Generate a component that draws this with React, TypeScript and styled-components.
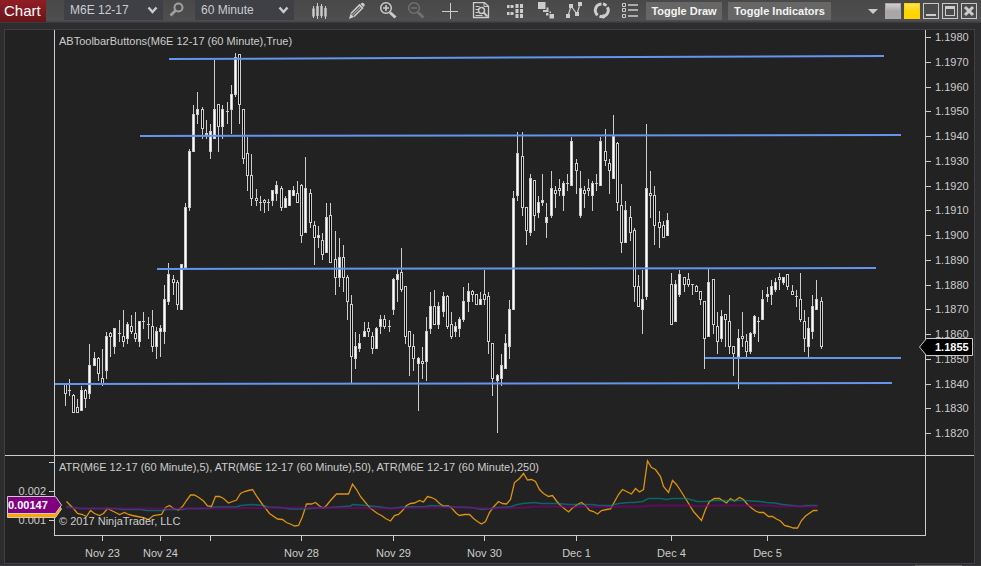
import React from 'react';
import styled, { createGlobalStyle } from 'styled-components';

const GlobalStyle = createGlobalStyle`
  * { box-sizing: border-box; }
  body {
    margin: 0;
    background: #2d2d30;
    color: #ccc;
    font: 11px/13px "Liberation Sans", Arial, sans-serif;
    overflow: hidden;
  }
  button, select { font: inherit; color: inherit; margin: 0; }
`;

const Window = styled.div`
  display: flex;
  flex-direction: column;
  min-height: 100vh;
`;

const Toolbar = styled.header`
  display: flex;
  align-items: flex-start;
  flex: 0 0 23px;
  padding-right: 4px;
  background: linear-gradient(#484848, #4f4f4f 21px, #3b3b3d 22px);
`;

const ChartTab = styled.h1`
  flex: 0 0 46px;
  height: 22px;
  margin: 0 18px 0 0;
  padding-left: 4px;
  background: linear-gradient(#911d24, #68151a);
  color: #fff;
  font-size: 15px;
  font-weight: 400;
  line-height: 22px;
`;

const ComboBox = styled.label`
  display: grid;
  flex: 0 0 99px;
  height: 20px;
  align-items: center;
  background: #3f3f46;
  > * { grid-area: 1 / 1; }
  svg { justify-self: end; margin-right: 5px; pointer-events: none; }
`;

const ComboSelect = styled.select`
  width: 100%;
  height: 20px;
  padding: 0 0 0 6px;
  border: 0;
  appearance: none;
  background: transparent;
  color: #ccc;
  font-size: 12px;
  line-height: 20px;
`;

const IconButton = styled.button<{ $gap?: number; $color?: string }>`
  display: block;
  flex: 0 0 20px;
  height: 22px;
  margin-left: ${(p) => p.$gap ?? 8}px;
  padding: 0;
  border: 0;
  background: none;
  color: ${(p) => p.$color ?? '#ccc'};
  svg { display: block; }
`;

const FindButton = styled(IconButton)`
  margin-right: 8px;
`;

const ToggleButton = styled.button<{ $width: number }>`
  flex: 0 0 ${(p) => p.$width}px;
  height: 18px;
  margin-top: 2px;
  margin-left: 6px;
  padding: 0;
  border: 0;
  background: #666;
  color: #f4f4f4;
  font-size: 11px;
  font-weight: 700;
  line-height: 18px;
  white-space: nowrap;
`;

const WindowControls = styled.div`
  display: flex;
  gap: 3px;
  margin-top: 3px;
  margin-left: auto;
`;

const WindowButton = styled.button<{ $fill?: string; $border?: string }>`
  width: 16px;
  height: 16px;
  padding: 0;
  border: 1px solid ${(p) => p.$border ?? '#c8c8c8'};
  background: ${(p) => p.$fill ?? 'transparent'};
  svg { display: block; }
`;

const MenuButton = styled(WindowButton)`
  margin-right: 1px;
  border-color: transparent;
`;

const ChartPanel = styled.main`
  display: grid;
  grid-template-columns: 49px minmax(0, 1fr) 48px;
  grid-template-rows: 425px 81px 1fr;
  flex: 1;
  margin: 6px 6px 1px 4px;
  border: 1px solid #3f3f46;
  background: #222;
`;

const PlotArea = styled.section<{ $lower?: boolean }>`
  position: relative;
  min-width: 0;
  border: solid #ccc;
  border-width: ${(p) => (p.$lower ? '1px' : '0 1px')};
`;

const PlotSvg = styled.svg`
  display: block;
  width: 100%;
  height: 100%;
`;

const PlotCaption = styled.p<{ $top: number }>`
  position: absolute;
  top: ${(p) => p.$top}px;
  left: 4px;
  margin: 0;
  white-space: nowrap;
`;

const AxisCell = styled.div<{ $ruled?: boolean }>`
  position: relative;
  border-top: ${(p) => (p.$ruled ? '1px solid #ccc' : '0')};
`;

const PriceScale = styled.ol`
  display: flex;
  flex-direction: column;
  justify-content: space-between;
  height: 410px;
  margin: 0;
  padding: 1px 0 0;
  list-style: none;
`;

const PriceTick = styled.li`
  display: flex;
  align-items: center;
  gap: 4px;
  height: 13px;
  &::before { content: ""; width: 5px; height: 1px; background: #ccc; }
`;

const AtrScale = styled.ol`
  display: flex;
  flex-direction: column;
  gap: 16px;
  margin: 0;
  padding: 0;
  list-style: none;
`;

const AtrTick = styled.li`
  display: flex;
  align-items: center;
  justify-content: flex-end;
  gap: 3px;
  height: 13px;
  &::after { content: ""; width: 5px; height: 1px; background: #ccc; }
`;

const PriceMarker = styled.div`
  position: absolute;
  top: 308px;
  left: -7px;
  width: 55px;
  height: 18px;
  color: #fff;
  svg { display: block; }
  b { position: absolute; top: 3px; left: 16px; }
`;

const AtrMarker = styled.div`
  position: absolute;
  z-index: 1;
  top: 40px;
  left: 2px;
  width: 56px;
  height: 23px;
  color: #fff;
  svg { display: block; }
  b { position: absolute; top: 3px; left: 1px; }
`;

const TimeAxis = styled.div`
  position: relative;
  grid-column: 2;
`;

const TimeTick = styled.span`
  position: absolute;
  top: 0;
  display: flex;
  flex-direction: column;
  align-items: center;
  gap: 6px;
  width: 60px;
  margin-left: -30px;
  &::before { content: ""; width: 1px; height: 5px; background: #ccc; }
`;

const StatusLine = styled.footer`
  flex: 0 0 1px;
  height: 1px;
  background: linear-gradient(#666, #666) right 19px top / 47px 1px no-repeat #3a3a3e;
`;

type Kind = 'u' | 'd' | 'x';
/** x, high, low, body top, body bottom, kind (u rising, d falling, x unchanged) */
type Candle = [number, number, number, number, number, Kind];

const candles: Candle[] = [
  [65,384,406,384,394,'d'],[69,379,396,390,391,'x'],[73,394,413,395,413,'d'],[77,399,413,407,413,'d'],
  [81,386,411,390,411,'u'],[85,389,408,390,399,'d'],[89,344,399,365,394,'u'],[94,352,366,358,366,'u'],
  [98,357,381,358,374,'d'],[102,349,386,378,384,'d'],[106,332,379,336,371,'u'],[110,332,357,333,337,'d'],
  [114,328,354,328,347,'u'],[119,320,342,333,334,'x'],[123,310,347,336,342,'d'],[127,322,344,324,339,'u'],
  [131,315,334,326,332,'d'],[135,312,342,333,339,'d'],[139,321,347,321,342,'u'],[143,312,329,321,322,'x'],
  [148,317,339,324,325,'x'],[152,310,352,326,347,'d'],[156,327,359,331,347,'u'],[160,325,357,328,332,'u'],
  [164,285,344,299,332,'u'],[168,263,305,274,302,'u'],[173,275,295,279,283,'d'],[177,280,310,282,305,'d'],
  [181,264,310,264,310,'u'],[185,203,268,207,268,'u'],[189,149,211,151,208,'u'],[193,105,152,114,152,'u'],
  [197,92,124,109,115,'u'],[202,107,139,109,129,'d'],[206,120,139,133,135,'d'],[210,124,159,131,152,'u'],
  [214,60,139,109,139,'u'],[218,104,152,104,127,'d'],[222,105,139,109,127,'u'],[227,102,124,111,112,'x'],
  [231,85,134,94,110,'u'],[235,53,97,57,95,'u'],[239,54,124,54,105,'d'],[243,109,164,109,159,'d'],
  [247,137,191,153,176,'d'],[251,154,206,175,199,'d'],[256,189,206,198,201,'d'],[260,196,211,202,203,'x'],
  [264,199,213,200,203,'d'],[268,199,211,202,203,'x'],[272,190,206,190,201,'u'],[276,181,201,185,194,'u'],
  [281,186,211,188,208,'d'],[285,196,208,198,208,'u'],[289,190,206,190,206,'u'],[293,186,196,190,196,'u'],
  [297,181,203,193,203,'d'],[301,184,243,185,236,'d'],[305,157,233,188,233,'u'],[310,189,228,193,223,'d'],
  [314,221,265,225,238,'d'],[318,226,248,235,238,'u'],[322,233,260,240,255,'d'],[326,203,253,217,253,'u'],
  [330,203,263,215,263,'d'],[335,231,295,259,278,'d'],[339,238,287,257,278,'u'],[343,245,292,257,278,'d'],
  [347,275,320,277,302,'d'],[351,295,383,304,357,'d'],[355,332,369,346,359,'u'],[359,334,352,343,349,'u'],
  [364,322,337,331,337,'u'],[368,322,337,328,332,'d'],[372,332,354,336,349,'d'],[376,327,349,328,349,'u'],
  [380,315,334,319,327,'u'],[384,315,329,319,327,'d'],[389,320,332,326,327,'x'],[393,278,315,279,310,'u'],
  [397,269,302,274,280,'u'],[401,248,292,272,290,'d'],[405,286,344,286,337,'d'],[409,331,376,331,347,'d'],
  [413,334,371,346,359,'d'],[418,357,411,358,364,'u'],[422,347,379,361,364,'d'],[426,317,381,331,362,'u'],
  [430,292,334,306,329,'u'],[434,290,325,306,325,'d'],[438,302,329,306,325,'u'],[443,292,317,296,312,'u'],
  [447,295,329,296,327,'d'],[451,312,339,324,337,'d'],[455,322,337,326,332,'u'],[459,317,337,319,329,'u'],
  [463,287,322,301,320,'u'],[468,283,312,291,302,'u'],[472,290,302,291,295,'d'],[476,294,305,294,305,'d'],
  [480,292,305,299,305,'u'],[484,270,305,294,300,'d'],[488,292,354,296,342,'d'],[492,343,396,343,379,'d'],
  [497,374,433,375,381,'u'],[501,354,386,365,379,'u'],[505,334,369,343,369,'u'],[509,300,359,309,347,'u'],
  [513,191,310,198,310,'u'],[517,132,201,153,196,'u'],[522,132,216,156,208,'d'],[526,207,245,207,231,'d'],
  [530,174,236,178,233,'u'],[534,180,231,180,216,'d'],[538,196,218,202,213,'u'],[542,174,206,200,203,'u'],
  [546,203,238,217,223,'u'],[551,171,218,188,216,'u'],[555,186,208,190,194,'d'],[559,179,196,188,191,'d'],
  [563,181,211,183,196,'u'],[567,174,191,183,184,'x'],[571,137,186,141,186,'u'],[576,159,194,163,171,'d'],
  [580,171,218,188,216,'u'],[584,186,208,190,194,'d'],[588,179,196,188,191,'d'],[592,181,211,183,196,'u'],
  [596,174,191,183,184,'x'],[600,137,186,141,186,'u'],[605,129,166,151,161,'d'],[609,159,194,163,171,'d'],
  [613,115,179,136,179,'u'],[617,142,211,143,203,'d'],[621,184,253,205,243,'d'],[625,201,243,210,243,'u'],
  [630,206,241,217,233,'d'],[634,228,302,230,287,'d'],[638,275,307,286,307,'d'],[642,270,334,299,310,'u'],
  [646,124,300,188,297,'u'],[650,171,218,193,196,'d'],[654,186,245,195,226,'d'],[659,211,248,222,228,'d'],
  [663,221,238,225,238,'d'],[667,213,236,220,236,'u'],[671,273,325,284,325,'d'],[675,280,322,284,322,'u'],
  [679,270,297,274,295,'u'],[684,277,292,277,285,'d'],[688,273,287,279,285,'d'],[692,284,295,284,285,'x'],
  [696,285,292,286,292,'d'],[700,291,305,291,300,'d'],[704,301,369,301,339,'d'],[708,269,337,282,337,'u'],
  [713,279,334,279,325,'d'],[717,312,354,326,342,'d'],[721,310,342,316,339,'u'],[725,314,347,314,320,'d'],
  [729,295,354,321,347,'d'],[733,346,376,346,354,'d'],[738,329,389,338,357,'u'],[742,312,347,336,339,'d'],
  [746,334,357,341,352,'d'],[750,332,354,333,352,'u'],[754,315,337,316,334,'u'],[758,317,342,321,322,'x'],
  [762,290,320,299,320,'u'],[767,287,302,294,297,'u'],[771,280,305,286,295,'u'],[775,278,292,282,290,'u'],
  [779,273,290,277,280,'d'],[783,277,285,277,283,'u'],[787,274,290,274,287,'d'],[792,285,295,291,295,'d'],
  [796,290,307,296,297,'x'],[800,273,322,299,320,'d'],[804,310,352,321,339,'d'],[808,317,357,328,347,'u'],
  [812,295,339,306,332,'u'],[816,280,310,299,310,'u'],[821,297,349,301,347,'d'],
];

/** Support and resistance lines: x1, y1, x2, y2 */
const levels = [
  [169, 59, 884, 56],
  [140, 136, 901, 135],
  [157, 269, 876, 268],
  [55, 384, 892, 383],
  [705, 358, 901, 358],
];

const atrFast =
  '66,501 69,504 73,508 77,513 82,514 86,516 90,510 94,513 99,515 103,513 107,508 111,510 115,512 119,514 124,512 128,514 132,515 137,516 142,517 148,519 153,515 161,514 165,507 169,505 173,508 178,509.5 182,506 186,500 190,494.5 194,494.5 199,497.5 203,500.5 207,505.5 211,506 215,496 219,496 223,498 228,502.5 232,501 236,499.5 240,493 244,491 248,490 252,489 257,497 262,504 266,509 269,513 277,518.5 282,519 286,522 291,524 294,525.5 298,525 302,516 306,503.5 311,503.5 315,502 319,505.5 323,507.5 326,505 330,500 336,493.5 348,493.5 352,483.5 356,489 360,496 369,507 377,513 381,515 385,518 390,520.5 394,515 398,514 402,510 406,505 410,503 414,502.5 419,500 423,501.5 427,496 431,497 435,499 439,503 443,505.5 448,505.5 452,508.5 456,513 459,515 464,514 469,514 473,518 477,521 481,523.5 485,521 489,512 493,506.5 498,501 502,503 506,503.5 510,499 514,482 519,478 523,473 527,479.5 531,479 535,481 539,489 543,493 548,496 552,495 556,500.5 560,505 568,511.5 572,507.5 577,504 581,502 585,505 589,510 593,511 597,513.5 601,510 606,509 610,508.5 618,494 622,489 626,491 631,493.5 635,488 639,491.5 643,489 647,460.5 651,467 655,469 660,476 663,486 668,492 672,480 676,484 680,490 685,498 693,511 701,520 705,509 709,501 714,498 719,498 722,500 726,502.5 730,498 734,500.5 739,497 743,499 747,504 751,507.5 755,510.5 759,512 763,512 768,516 772,516 776,518.5 780,520.5 784,525 788,526 793,527.5 797,527.5 801,520 805,515.5 813,510 817,510';
const atrMedium =
  '66,506 72,507 80,508 115,508 122,509 140,509 146,510 161,510 166,509 182,509 187,508 208,508 214,506.5 236,506.5 240,505 252,504 262,505 268,506.5 280,507 290,508.5 305,508.5 315,507.5 330,507 350,505.5 352,504 366,505 380,506.5 390,508 402,506.5 425,506 430,505 440,505.5 455,506.5 470,507 482,509 490,508 497,507 510,506.5 515,504.5 522,503 534,502 541,503 558,503 568,504 592,504 598,505 610,505 618,503 628,502 634,502 642,501 648,498 660,498 666,499 672,498 686,498 697,501 706,501 714,500 744,500 751,500.5 760,501 766,502 774,502.5 782,504 792,505 800,506 806,505 817,505';
const atrSlow =
  '66,507 75,508 110,508 200,508 250,507.5 330,507 390,508 430,507 460,507 490,508 525,507 534,506 560,506 568,506.5 585,506 610,506.5 620,506 642,506 650,505 690,505 701,506 708,505 770,505 778,506 817,506';

const prices = Array.from({ length: 17 }, (_, i) => (1.198 - i * 0.001).toFixed(4));

const days: [number, string][] = [
  [102, 'Nov 23'],
  [160, 'Nov 24'],
  [210, ''],
  [301, 'Nov 28'],
  [393, 'Nov 29'],
  [484, 'Nov 30'],
  [576, 'Dec 1'],
  [671, 'Dec 4'],
  [767, 'Dec 5'],
];
const PLOT_LEFT = 55;
const PLOT_WIDTH = 870;

function CandleShape({ candle }: { candle: Candle }) {
  const [x, high, low, top, bottom, kind] = candle;
  return (
    <g>
      <rect x={x} y={high} width={1} height={low - high} fill="#ccc" />
      <rect x={x - 1} y={top} width={3} height={bottom - top} fill="#ccc" />
      {kind !== 'x' && bottom - top > 2 && (
        <rect x={x} y={top + 1} width={1} height={bottom - top - 2} fill={kind === 'u' ? '#fff' : '#000'} />
      )}
    </g>
  );
}

function Icon({ children }: { children: React.ReactNode }) {
  return (
    <svg width="20" height="22" viewBox="0 0 20 22" fill="none" stroke="currentColor" aria-hidden="true">
      {children}
    </svg>
  );
}

function CandlesIcon() {
  return (
    <Icon>
      <path d="M3.5 6v12M7.5 3v16M11.5 4v14M15.5 6v13" />
      <path d="M3.5 8.5v8M7.5 6v10M11.5 6v10M15.5 8v8.5" strokeWidth="2.4" />
    </Icon>
  );
}

function PencilIcon() {
  return (
    <Icon>
      <path d="M2 19 3.5 13.5 7 17Z" fill="currentColor" stroke="none" />
      <path d="M4 13.500 12.500 5 15.500 8 7 16.500" strokeWidth="1.600" />
      <path d="M5.500 15 14 6.500" />
      <path d="M13.500 4 15 2.800Q16 2.500 17 3.500T17.600 5.600L16.400 7Z" fill="currentColor" stroke="none" />
    </Icon>
  );
}

function MagnifierIcon({ plus }: { plus?: boolean }) {
  return (
    <Icon>
      <circle cx="8" cy="8" r="5.3" strokeWidth="1.5" />
      <path d="M12 12.500 17.500 17.500" strokeWidth="3" />
      <path d={plus ? 'M5 8h6M8 5v6' : 'M5 8h6'} strokeWidth="1.6" />
    </Icon>
  );
}

function SearchIcon() {
  return (
    <Icon>
      <circle cx="11.5" cy="7.5" r="4" strokeWidth="2" />
      <path d="M8.500 10.500 3.500 15.500" strokeWidth="2.6" />
    </Icon>
  );
}

function CrosshairIcon() {
  return (
    <Icon>
      <path d="M2 11.5h16M10.5 3v16" />
    </Icon>
  );
}

function DataBoxIcon() {
  return (
    <Icon>
      <path d="M2.500 2.700h11l4 3.500v11.300h-15Z" strokeWidth="1.3" />
      <path d="M13 3v3.500h4M4.500 6.500h4M4.500 9.500h2.500M4.500 12.500h2.500M4.500 15.500h7" />
      <circle cx="10.5" cy="10.5" r="3" strokeWidth="1.5" />
      <path d="m12.500 12.500 4 4" strokeWidth="2" />
    </Icon>
  );
}

function ChartTraderIcon() {
  return (
    <Icon>
      <g fill="currentColor" stroke="none">
        <path d="M2 5h2.500v3H2ZM5.500 5H8l1 1.500L8 8H5.500ZM2 12h2.500v3H2ZM5.500 12H8l1 1.500L8 15H5.500Z" />
        <path d="M10.500 4h3v4h-3ZM10.500 9h3v4h-3ZM10.500 14h3v4h-3ZM15 4h3v4h-3ZM15 9h3v4h-3ZM15 14h3v4h-3Z" />
      </g>
    </Icon>
  );
}

function StrategiesIcon() {
  return (
    <Icon>
      <path
        d="M2 2h7.500v7H2ZM10.500 7.500h2V12H7v-2h3.500ZM13.500 11.500H15V13h-2.500v2.500H10V13h3.500ZM13.500 14H18v4.500h-4.500Z"
        fill="currentColor"
        stroke="none"
      />
    </Icon>
  );
}

function IndicatorsIcon() {
  return (
    <Icon>
      <path d="M4 16 7 6l6 8 3-10" strokeWidth="1.2" />
      <g fill="currentColor" stroke="none">
        <path d="M2 14h4v4H2ZM5 4h4v4H5ZM11 12h4v4h-4ZM14 2h4v4h-4Z" />
      </g>
    </Icon>
  );
}

function ReloadIcon() {
  return (
    <Icon>
      <path d="M9.500 3.900a6.300 6.300 0 0 0-3.800 11.200M7.500 16.100A6.300 6.300 0 0 0 15.400 7.200M14.300 5.700A6.300 6.300 0 0 0 11 3.900" strokeWidth="3" />
      <path d="M11.500 13.500 9 16.500l3 2.500Z" fill="currentColor" stroke="none" />
    </Icon>
  );
}

function PropertiesIcon() {
  return (
    <Icon>
      <path d="M2.500 3.500h3v3h-3ZM2.500 8.500h3v3h-3ZM2.500 14.500h3v3h-3Z" />
      <path d="M8 5h10M8 10h10M8 16h10" strokeWidth="1.4" />
    </Icon>
  );
}

function Combo({ label, value }: { label: string; value: string }) {
  return (
    <ComboBox>
      <ComboSelect aria-label={label}>
        <option>{value}</option>
      </ComboSelect>
      <svg width="11" height="8" viewBox="0 0 11 8" fill="none" stroke="#ccc" strokeWidth="2.4" aria-hidden="true">
        <path d="M1.5 1.5 5.5 6 9.5 1.5" />
      </svg>
    </ComboBox>
  );
}

export default function App() {
  return (
    <Window>
      <GlobalStyle />
      <Toolbar>
        <ChartTab>Chart</ChartTab>
        <Combo label="Instrument" value="M6E 12-17" />
        <FindButton $gap={4} $color="#a0a0a0" aria-label="Find instrument"><SearchIcon /></FindButton>
        <Combo label="Interval" value="60 Minute" />
        <IconButton $gap={16} aria-label="Chart style"><CandlesIcon /></IconButton>
        <IconButton $gap={17} aria-label="Drawing tools"><PencilIcon /></IconButton>
        <IconButton $gap={11} aria-label="Zoom in"><MagnifierIcon plus /></IconButton>
        <IconButton $color="#707070" aria-label="Zoom out"><MagnifierIcon /></IconButton>
        <IconButton $gap={14} aria-label="Crosshair"><CrosshairIcon /></IconButton>
        <IconButton $gap={11} aria-label="Data box"><DataBoxIcon /></IconButton>
        <IconButton $gap={14} aria-label="Chart trader"><ChartTraderIcon /></IconButton>
        <IconButton $gap={11} aria-label="Strategies"><StrategiesIcon /></IconButton>
        <IconButton aria-label="Indicators"><IndicatorsIcon /></IconButton>
        <IconButton aria-label="Reload"><ReloadIcon /></IconButton>
        <IconButton aria-label="Properties"><PropertiesIcon /></IconButton>
        <ToggleButton $width={76}>Toggle Draw</ToggleButton>
        <ToggleButton $width={103}>Toggle Indicators</ToggleButton>
        <WindowControls>
          <MenuButton aria-label="Window menu">
            <svg width="14" height="14" viewBox="0 0 14 14"><path d="M2 5h10L7 10Z" fill="#ccc" /></svg>
          </MenuButton>
          <WindowButton aria-label="Instrument link" $border="#aaa" $fill="linear-gradient(#d0d0d0, #aaa6a8 50%)" />
          <WindowButton aria-label="Interval link" $border="#ffd500" $fill="linear-gradient(#ffe35a, #ffd500 50%)" />
          <WindowButton aria-label="Minimize">
            <svg width="14" height="14" viewBox="0 0 14 14"><path d="M2 10h10v2H2Z" fill="#ccc" /></svg>
          </WindowButton>
          <WindowButton aria-label="Maximize">
            <svg width="14" height="14" viewBox="0 0 14 14"><path d="M2 2h10v10H2ZM3 5v6h8V5Z" fill="#ccc" fillRule="evenodd" /></svg>
          </WindowButton>
          <WindowButton aria-label="Close">
            <svg width="14" height="14" viewBox="0 0 14 14"><path d="m3 3 8 8m0-8-8 8" stroke="#ccc" strokeWidth="3" /></svg>
          </WindowButton>
        </WindowControls>
      </Toolbar>

      <ChartPanel>
        <AxisCell />
        <PlotArea>
          <PlotSvg viewBox="55 30 870 425" preserveAspectRatio="none" role="img" aria-label="Price chart">
            <g shapeRendering="crispEdges">
              {candles.map((c) => <CandleShape key={c[0]} candle={c} />)}
            </g>
            {levels.map(([x1, y1, x2, y2]) => (
              <line key={y1} x1={x1} y1={y1} x2={x2} y2={y2} stroke="#6495ed" strokeWidth="2" />
            ))}
          </PlotSvg>
          <PlotCaption $top={5}>ABToolbarButtons(M6E 12-17 (60 Minute),True)</PlotCaption>
        </PlotArea>
        <AxisCell>
          <PriceScale>
            {prices.map((p) => <PriceTick key={p}>{p}</PriceTick>)}
          </PriceScale>
          <PriceMarker>
            <svg width="55" height="18" viewBox="0 0 55 18">
              <path d="M.5 9 7.5.5h46v17h-46Z" fill="#000" stroke="#ccc" />
            </svg>
            <b>1.1855</b>
          </PriceMarker>
        </AxisCell>

        <AxisCell $ruled>
          <AtrScale>
            <AtrTick />
            <AtrTick>0.002</AtrTick>
            <AtrTick>0.001</AtrTick>
          </AtrScale>
          <AtrMarker>
            <svg width="56" height="23" viewBox="0 0 56 23">
              <path d="M.5 5.5h48L54.5 13l-6 8.500H.5Z" fill="#ffa500" stroke="#ccc" />
              <path d="M.5.5h48L54.5 9l-6 8.500H.5Z" fill="#800080" stroke="#ccc" />
            </svg>
            <b>0.00147</b>
          </AtrMarker>
        </AxisCell>
        <PlotArea $lower>
          <PlotSvg viewBox="55 456 870 79" preserveAspectRatio="none" role="img" aria-label="ATR chart">
            <g fill="none" transform="translate(0.5 0.5)">
              <polyline points={atrFast} stroke="#dd9210" strokeWidth="1.3" />
              <polyline points={atrMedium} stroke="#008b8b" strokeOpacity="0.65" strokeWidth="1.6" />
              <polyline points={atrSlow} stroke="#800080" strokeOpacity="0.65" strokeWidth="2" />
            </g>
          </PlotSvg>
          <PlotCaption $top={5}>
            ATR(M6E 12-17 (60 Minute),5), ATR(M6E 12-17 (60 Minute),50), ATR(M6E 12-17 (60 Minute),250)
          </PlotCaption>
          <PlotCaption $top={59}>© 2017 NinjaTrader, LLC</PlotCaption>
        </PlotArea>
        <AxisCell $ruled />

        <TimeAxis>
          {days.map(([x, label]) => (
            <TimeTick key={x} style={{ left: `${((x - PLOT_LEFT + 1.5) / (PLOT_WIDTH + 2)) * 100}%` }}>
              {label}
            </TimeTick>
          ))}
        </TimeAxis>
      </ChartPanel>
      <StatusLine />
    </Window>
  );
}
